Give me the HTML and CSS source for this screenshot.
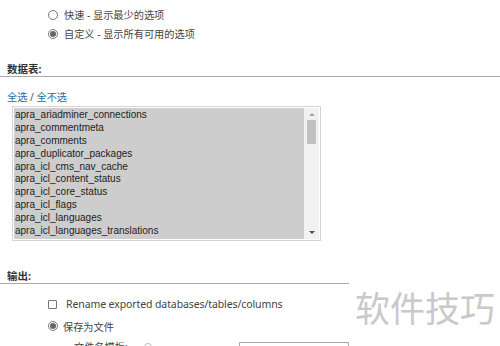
FILE: index.html
```html
<!DOCTYPE html>
<html>
<head>
    <meta charset="UTF-8">
    <title>导出</title>
    <link rel="stylesheet" href="styles.css">
</head>
<body>
    <div class="page">
        <div class="method">
            <label class="opt"><span class="radio"></span>快速 - 显示最少的选项</label>
            <label class="opt"><span class="radio checked"></span>自定义 - 显示所有可用的选项</label>
        </div>

        <h3 class="sec-title">数据表:</h3>
        <div class="select-links"><a href="#">全选</a> / <a href="#">全不选</a></div>
        <div class="table-box">
            <ul class="table-list">
                <li>apra_ariadminer_connections</li>
                <li>apra_commentmeta</li>
                <li>apra_comments</li>
                <li>apra_duplicator_packages</li>
                <li>apra_icl_cms_nav_cache</li>
                <li>apra_icl_content_status</li>
                <li>apra_icl_core_status</li>
                <li>apra_icl_flags</li>
                <li>apra_icl_languages</li>
                <li>apra_icl_languages_translations</li>
                <li>apra_icl_locale_map</li>
            </ul>
            <div class="scrollbar">
                <span class="arrow up"></span>
                <span class="thumb"></span>
                <span class="track"></span>
                <span class="arrow down"></span>
            </div>
        </div>

        <div class="output">
            <h3 class="sec-title">输出:</h3>
            <label class="opt check-row"><span class="checkbox"></span>Rename exported databases/tables/columns</label>
            <label class="opt save-row"><span class="radio checked"></span>保存为文件</label>
            <div class="filename-row">
                <span class="filename-label">文件名模板:</span>
                <span class="help"></span>
                <span class="filename-input"></span>
            </div>
        </div>
    </div>

    <div class="watermark">软件技巧</div>
</body>
</html>
```

FILE: styles.css
```css
* {
    margin: 0;
    padding: 0;
    box-sizing: border-box;
}

body {
    font-family: "Noto Sans", "Noto Sans CJK SC", sans-serif;
    background-color: #ffffff;
    color: #444;
    width: 500px;
    height: 346px;
    overflow: hidden;
    position: relative;
}

.page {
    padding: 5px 0 0 7px;
}

/* 单选 / 复选 */
.opt {
    display: flex;
    align-items: center;
    height: 19px;
    font-size: 10.2px;
    color: #444;
}

.method {
    padding-left: 41px;
}

.method .radio {
    margin-right: 6px;
}

.radio {
    width: 10px;
    height: 10px;
    border: 1px solid #777;
    border-radius: 50%;
    background-color: #fff;
    display: inline-flex;
    align-items: center;
    justify-content: center;
    flex-shrink: 0;
}

.radio.checked::after {
    content: "";
    width: 6px;
    height: 6px;
    border-radius: 50%;
    background-color: #666;
}

.checkbox {
    width: 9px;
    height: 9px;
    border: 1px solid #777;
    border-radius: 1px;
    background-color: #fff;
    flex-shrink: 0;
    margin-right: 9px;
}

/* 标题 */
.sec-title {
    font-size: 10.5px;
    font-weight: bold;
    color: #333;
    line-height: 14px;
    border-bottom: 1px solid #aaa;
    margin-top: 19px;
    margin-left: -7px;
    padding-left: 7px;
}

.select-links {
    margin-top: 13px;
    font-size: 10.2px;
    line-height: 14px;
    color: #555;
}

.select-links a {
    color: #2b6a9c;
    text-decoration: none;
}

/* 数据表列表 */
.table-box {
    margin: 2px 0 0 5px;
    width: 309px;
    height: 135px;
    border: 1px solid #d4d4d4;
    padding: 1px;
    display: flex;
    background-color: #fff;
}

.table-list {
    list-style: none;
    flex: 1;
    overflow: hidden;
    background-color: #cdcdcd;
    font-family: "Liberation Sans", Arial, sans-serif;
    font-size: 10px;
    line-height: 12.87px;
    color: #222;
    padding-top: 1px;
}

.table-list li {
    padding-left: 1px;
    white-space: nowrap;
}

.scrollbar {
    width: 15px;
    background-color: #f1f1f1;
    display: flex;
    flex-direction: column;
    align-items: center;
}

.arrow {
    width: 0;
    height: 0;
    border-left: 3px solid transparent;
    border-right: 3px solid transparent;
}

.arrow.up {
    border-bottom: 3px solid #a3a3a3;
    margin: 5px 0 4px;
}

.arrow.down {
    border-top: 3px solid #505050;
    margin: 0 0 5px;
}

.thumb {
    width: 9px;
    height: 24px;
    background-color: #c1c1c1;
}

.track {
    flex: 1;
}

/* 输出 */
.output {
    width: 342px;
}

.output .sec-title {
    margin-top: 28px;
}

.check-row {
    height: 22px;
    margin-top: 9px;
    padding-left: 41px;
    font-size: 10.5px;
    letter-spacing: -0.1px;
}

.save-row {
    height: 22px;
    padding-left: 41px;
}

.save-row .radio {
    margin-right: 5px;
}

.filename-row {
    display: flex;
    align-items: flex-start;
    margin-top: 3px;
    padding-left: 67px;
    font-size: 10.2px;
    line-height: 14px;
}

.help {
    width: 8px;
    height: 8px;
    border: 1px solid #bbb;
    border-radius: 50%;
    margin: 3px 0 0 16px;
}

.filename-input {
    width: 110px;
    height: 20px;
    margin: 2px 0 0 auto;
    border: 1px solid #aaa;
}

/* 水印 */
.watermark {
    position: absolute;
    left: 355px;
    top: 282px;
    font-family: "Noto Sans CJK SC", sans-serif;
    font-size: 35px;
    line-height: 50px;
    color: #c9c9c9;
}
```
